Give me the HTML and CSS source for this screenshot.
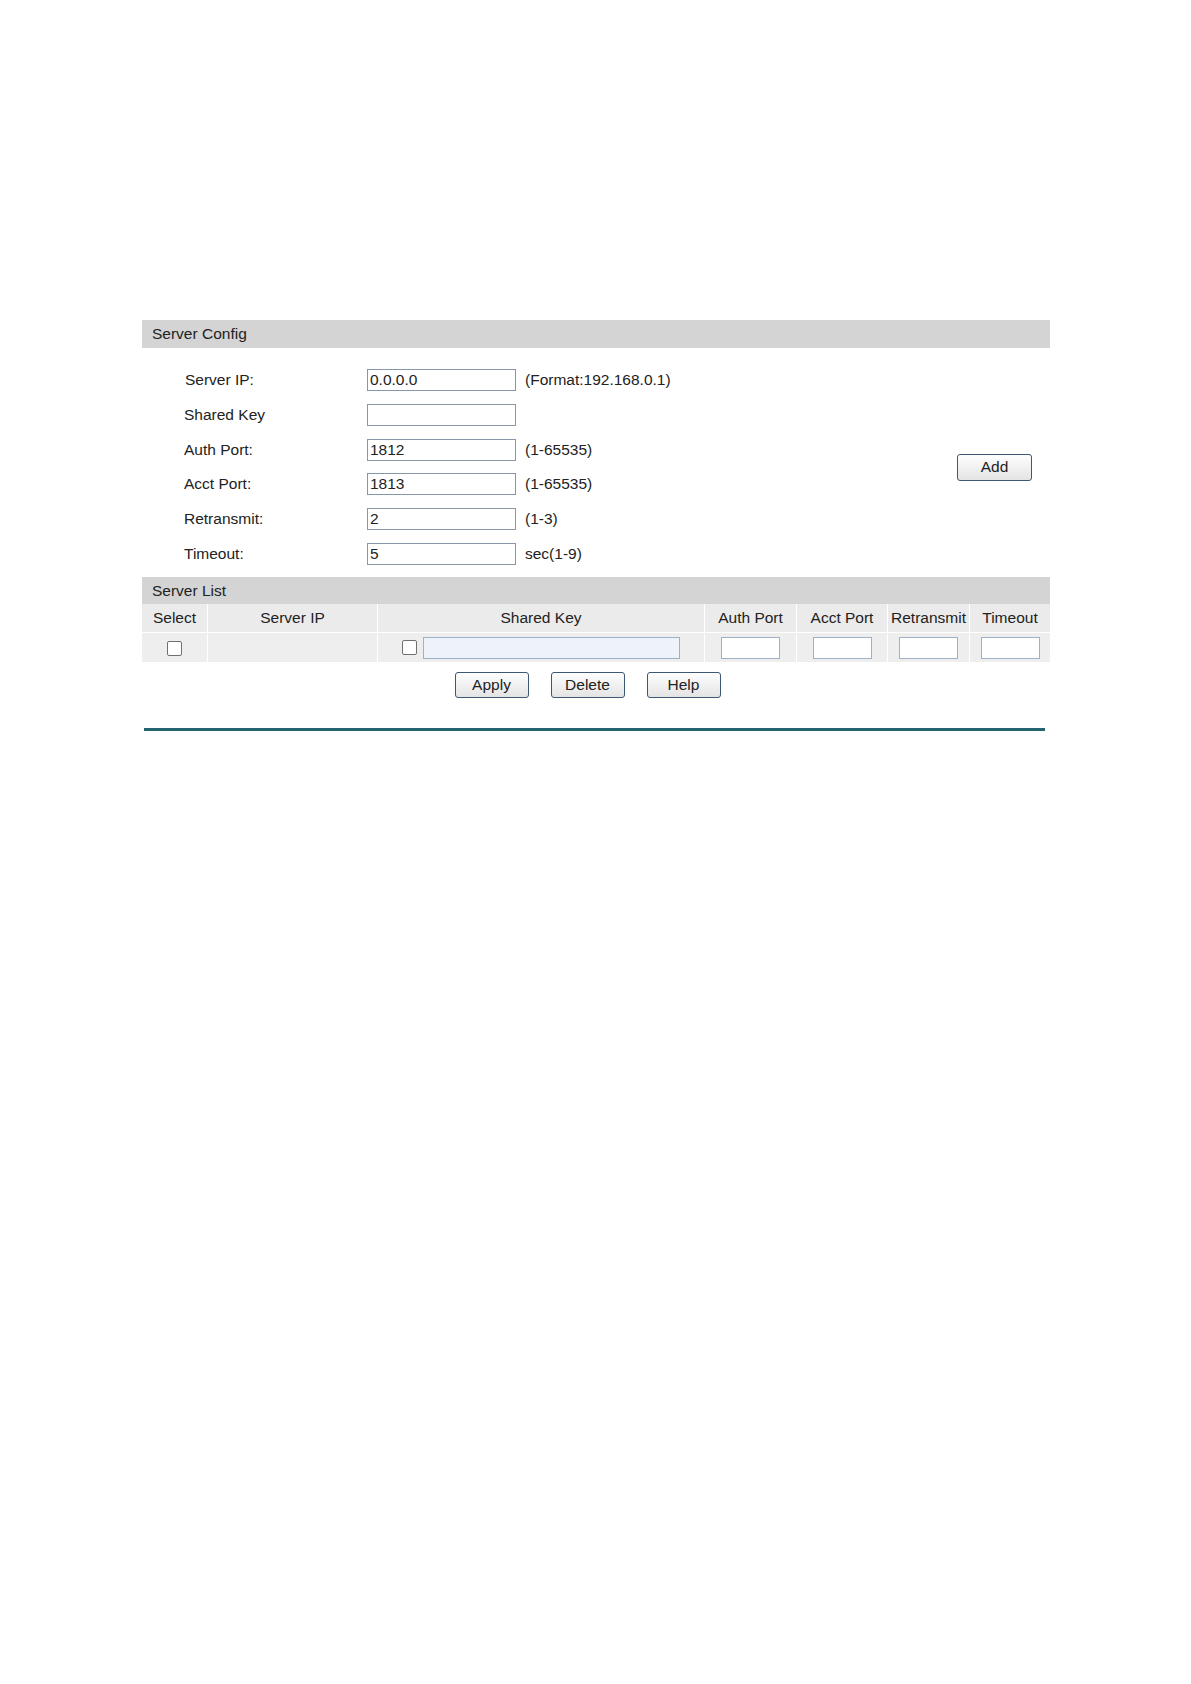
FILE: index.html
```html
<!DOCTYPE html>
<html lang="en">
<head>
    <meta charset="UTF-8">
    <title>Server Config</title>
    <link rel="stylesheet" href="styles.css">
</head>
<body>
    <div class="panel">
        <div class="bar">Server Config</div>

        <div class="config">
            <table class="form">
                <tr>
                    <td class="label label-ip">Server IP:</td>
                    <td><input class="field" type="text" value="0.0.0.0"></td>
                    <td class="hint">(Format:192.168.0.1)</td>
                </tr>
                <tr>
                    <td class="label">Shared Key</td>
                    <td><input class="field" type="text" value=""></td>
                    <td class="hint"></td>
                </tr>
                <tr>
                    <td class="label">Auth Port:</td>
                    <td><input class="field" type="text" value="1812"></td>
                    <td class="hint">(1-65535)</td>
                </tr>
                <tr>
                    <td class="label">Acct Port:</td>
                    <td><input class="field" type="text" value="1813"></td>
                    <td class="hint">(1-65535)</td>
                </tr>
                <tr>
                    <td class="label">Retransmit:</td>
                    <td><input class="field" type="text" value="2"></td>
                    <td class="hint">(1-3)</td>
                </tr>
                <tr>
                    <td class="label">Timeout:</td>
                    <td><input class="field" type="text" value="5"></td>
                    <td class="hint">sec(1-9)</td>
                </tr>
            </table>
            <button class="btn btn-add">Add</button>
        </div>

        <div class="bar bar-list">Server List</div>
        <table class="list">
            <tr class="head">
                <td class="c-select">Select</td>
                <td class="c-ip">Server IP</td>
                <td class="c-key">Shared Key</td>
                <td class="c-auth">Auth Port</td>
                <td class="c-acct">Acct Port</td>
                <td class="c-retr">Retransmit</td>
                <td class="c-time">Timeout</td>
            </tr>
            <tr class="row">
                <td><span class="check"></span></td>
                <td></td>
                <td>
                    <div class="key-cell">
                        <span class="check"></span>
                        <input class="key-input" type="text" value="">
                    </div>
                </td>
                <td><input class="small" type="text" value=""></td>
                <td><input class="small" type="text" value=""></td>
                <td><input class="small" type="text" value=""></td>
                <td><input class="small" type="text" value=""></td>
            </tr>
        </table>

        <div class="actions">
            <button class="btn">Apply</button>
            <button class="btn">Delete</button>
            <button class="btn">Help</button>
        </div>

        <div class="rule"></div>
    </div>
</body>
</html>
```

FILE: styles.css
```css
body {
    margin: 0;
    background: #ffffff;
    font-family: "Liberation Sans", Arial, sans-serif;
    font-size: 15.5px;
    color: #222222;
}
.panel {
    width: 908px;
    margin: 320px 0 0 142px;
}
.bar {
    height: 28px;
    line-height: 28px;
    padding-left: 10px;
    background: #d4d4d4;
}
.bar-list {
    height: 27px;
    line-height: 27px;
}
.config {
    display: flex;
    align-items: center;
    justify-content: space-between;
    padding: 15px 18px 6px 0;
}
.form {
    border-collapse: collapse;
}
.form td {
    height: 34.7px;
    padding: 0;
}
.label {
    width: 225px;
    padding-left: 42px !important;
    box-sizing: border-box;
}
.label-ip {
    padding-left: 43px !important;
}
.hint {
    padding-left: 9px !important;
}
.field {
    width: 149px;
    height: 22px;
    box-sizing: border-box;
    margin: 0;
    padding: 0 2px;
    border: 1px solid #8696ab;
    font-family: inherit;
    font-size: 15.5px;
    color: #222222;
    display: block;
}
.btn {
    width: 74px;
    height: 26px;
    padding: 0;
    border: 1px solid #3c5874;
    border-radius: 3px;
    background: linear-gradient(#fefefe, #e4e4e4);
    font-family: inherit;
    font-size: 15.5px;
    color: #222222;
}
.btn-add {
    width: 75px;
    height: 27px;
}
.list {
    width: 908px;
    border-collapse: collapse;
    table-layout: fixed;
}
.list td {
    border: 1px solid #ffffff;
    padding: 0;
    text-align: center;
}
.list tr:first-child td {
    border-top: none;
}
.list td:first-child {
    border-left: none;
}
.list td:last-child {
    border-right: none;
}
.head td {
    height: 28px;
    background: #ebebeb;
}
.row td {
    height: 29px;
    background: #eeeeee;
}
.c-select { width: 65px; }
.c-ip { width: 169px; }
.c-key { width: 326px; }
.c-auth { width: 91px; }
.c-acct { width: 90px; }
.c-retr { width: 81px; }
.c-time { width: 80px; }
.check {
    display: inline-block;
    width: 15px;
    height: 15px;
    box-sizing: border-box;
    border: 1px solid #707070;
    border-radius: 2px;
    background: #ffffff;
    vertical-align: middle;
}
.key-cell {
    display: flex;
    align-items: center;
    justify-content: center;
    gap: 6px;
}
.key-input {
    width: 257px;
    height: 22px;
    box-sizing: border-box;
    margin: 0;
    border: 1px solid #9fb1c7;
    background: #eef3fb;
}
.small {
    width: 59px;
    height: 22px;
    box-sizing: border-box;
    margin: 0;
    border: 1px solid #9fb1c7;
    background: #ffffff;
    vertical-align: middle;
}
.actions {
    display: flex;
    justify-content: center;
    gap: 22px;
    padding: 9px 17px 0 0;
}
.rule {
    margin: 30px 5px 0 2px;
    height: 3px;
    background: #236470;
}
```
